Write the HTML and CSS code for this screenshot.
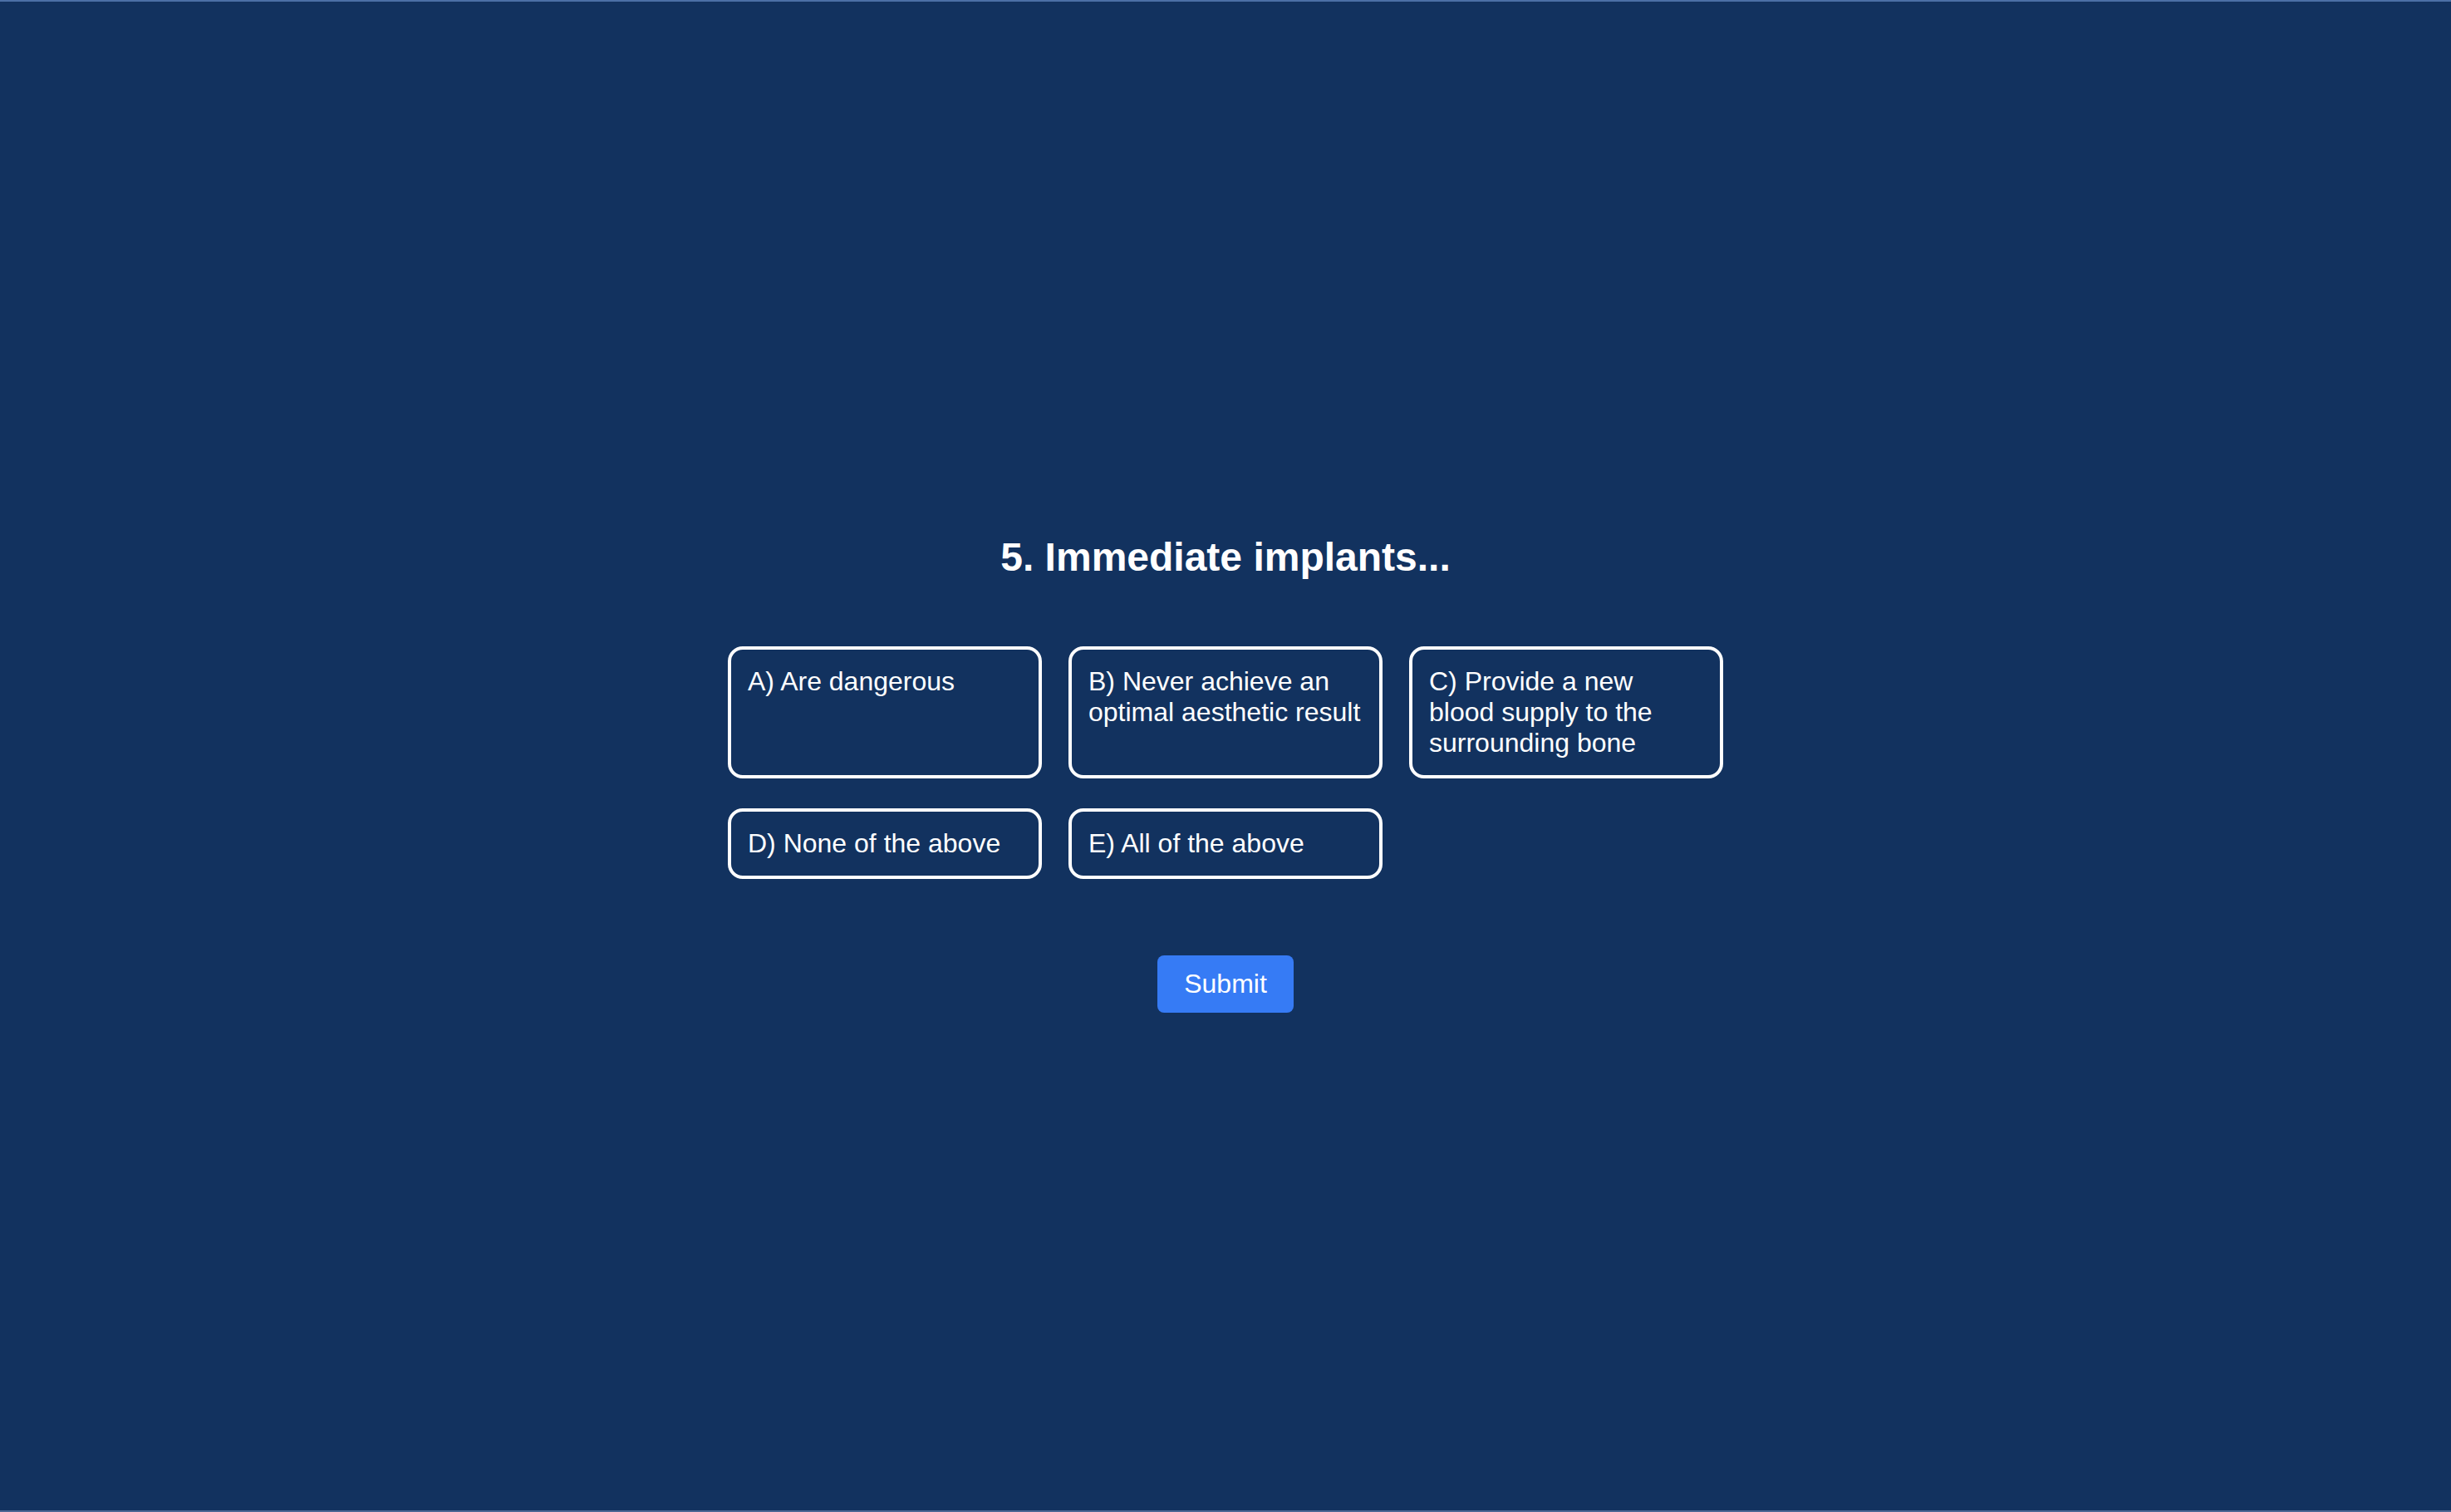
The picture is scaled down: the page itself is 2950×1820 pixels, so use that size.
FILE: index.html
```html
<!DOCTYPE html>
<html lang="en">
<head>
<meta charset="utf-8">
<title>Quiz</title>
<link rel="stylesheet" href="styles.css">
</head>
<body>
<div class="frame">
  <div class="quiz">
    <h1 class="question">5. Immediate implants...</h1>
    <div class="options">
      <button class="option">A) Are dangerous</button>
      <button class="option">B) Never achieve an optimal aesthetic result</button>
      <button class="option">C) Provide a new blood supply to the surrounding bone</button>
      <button class="option">D) None of the above</button>
      <button class="option">E) All of the above</button>
    </div>
    <button class="submit">Submit</button>
  </div>
</div>
</body>
</html>
```
FILE: styles.css
```css
html, body {
  margin: 0;
  padding: 0;
  height: 100%;
}
body {
  background: #12325f;
  font-family: "Liberation Sans", Arial, sans-serif;
  color: #ffffff;
}
.frame {
  box-sizing: border-box;
  height: 100vh;
  border-top: 2px solid #4b6fa6;
  border-bottom: 2px solid #4c6894;
  display: flex;
  align-items: center;
  justify-content: center;
  padding-top: 42px;
}
.quiz {
  display: flex;
  flex-direction: column;
  align-items: center;
}
.question {
  margin: 0 0 80px 0;
  font-size: 48px;
  font-weight: 700;
  line-height: normal;
  color: #ffffff;
  text-align: center;
}
.options {
  display: grid;
  grid-template-columns: repeat(3, 378px);
  column-gap: 32px;
  row-gap: 36px;
}
.option {
  box-sizing: border-box;
  background: transparent;
  border: 4px solid #ffffff;
  border-radius: 18px;
  padding: 20px;
  margin: 0;
  font-family: "Liberation Sans", Arial, sans-serif;
  font-size: 32px;
  line-height: normal;
  color: #ffffff;
  text-align: left;
  display: flex;
  align-items: flex-start;
  cursor: pointer;
}
.submit {
  margin-top: 92px;
  background: #367bf5;
  color: #ffffff;
  border: none;
  border-radius: 8px;
  padding: 16px 32px;
  font-family: "Liberation Sans", Arial, sans-serif;
  font-size: 32px;
  line-height: normal;
  cursor: pointer;
}
```
